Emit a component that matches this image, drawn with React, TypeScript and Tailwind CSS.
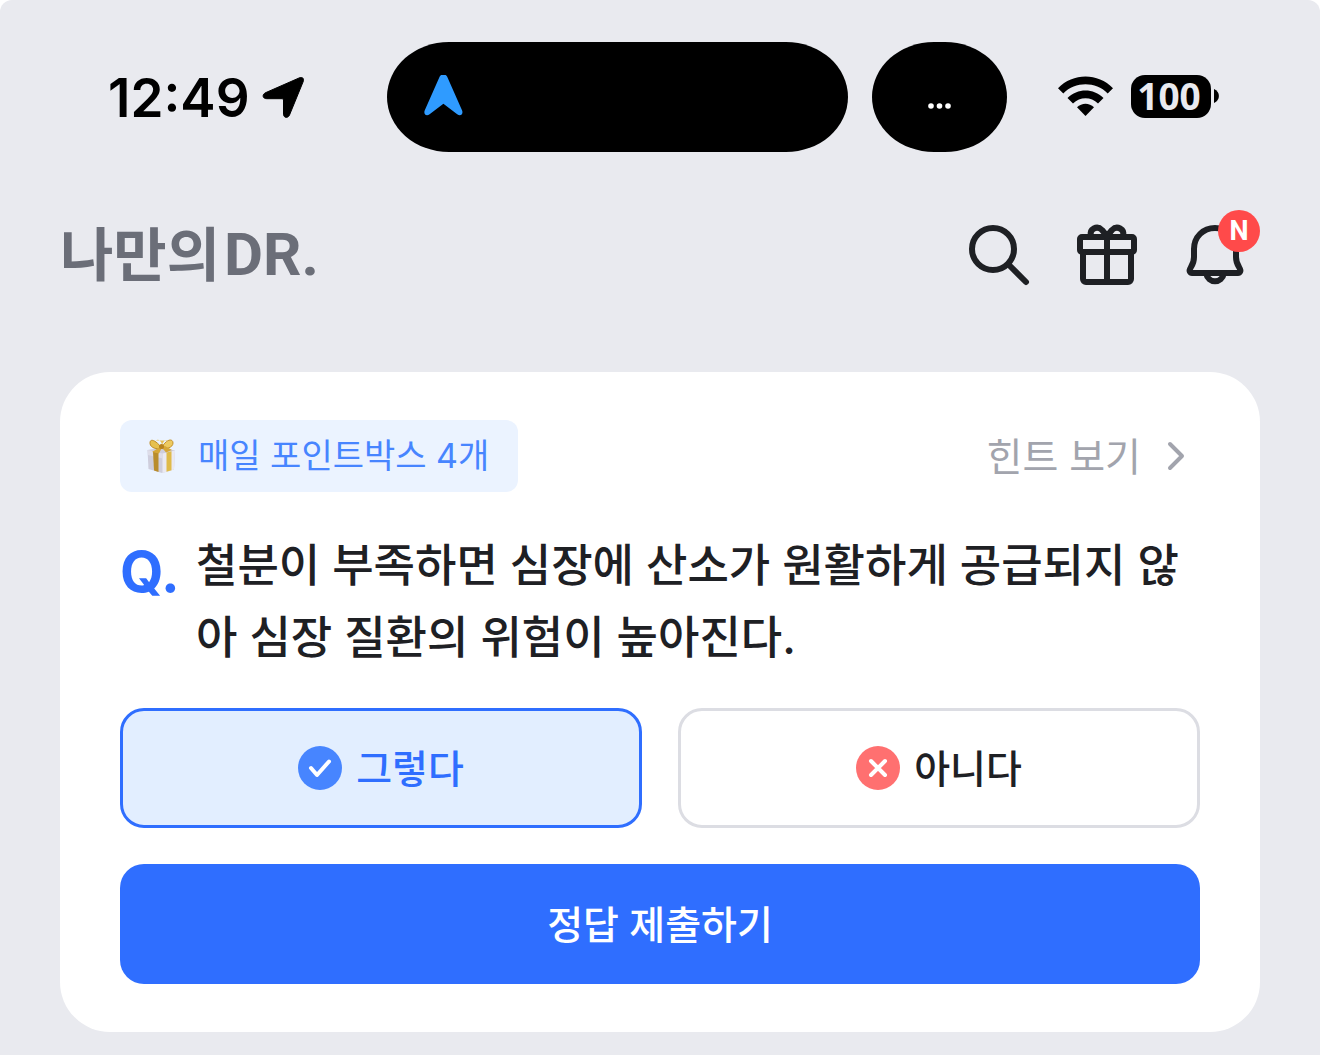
import { useState } from "react";

const answers = [
  { id: "yes", label: "그렇다" },
  { id: "no", label: "아니다" },
];

function StatusBar() {
  return (
    <header className="flex h-[110px] items-center pr-[41px] pl-[48px]">
      <div className="flex w-[279px] items-center gap-3">
        <time className="pt-[2px] text-[53px] leading-none font-semibold">12:49</time>
        <svg viewBox="0 0 44 44" className="size-[44px]" aria-hidden="true">
          <path
            d="M4 17.500 37 3c3.500-1.500 5.500.5 4 4L27.500 40c-1.500 3.500-6 3-6-.8V25c0-.9-.4-1.300-1.300-1.300H4.800c-4.500 0-5-4.500-.8-6.200Z"
            stroke="#000"
            strokeWidth="1"
          />
        </svg>
      </div>
      <div className="flex h-full gap-6">
        <div className="flex w-[461px] items-center rounded-[62px/55px] bg-black pl-[37px]">
          <svg viewBox="0 0 40 44" className="h-[44px] w-[40px]" aria-hidden="true">
            <path
              d="M15.600 1.800c1.600-3.300 6-3.300 7.600 0L38 35.300c1.700 4-1.600 6.500-4.800 4L19.400 28.800 5.600 39.300c-3.200 2.500-6.500 0-4.800-4Z"
              fill="#2f9bff"
            />
          </svg>
        </div>
        <div className="flex w-[135px] items-center justify-center rounded-[62px/55px] bg-black pt-[18px]">
          <svg viewBox="0 0 24 6" className="h-[6px] w-[24px]" fill="#fff" aria-hidden="true">
            <circle cx="3" cy="3" r="2.8" />
            <circle cx="11.500" cy="3" r="2.8" />
            <circle cx="20" cy="3" r="2.8" />
          </svg>
        </div>
      </div>
      <div className="ml-auto flex items-center gap-[18px] pb-[2px]">
        <svg viewBox="0 0 55 40" className="h-[40px] w-[55px]" aria-hidden="true">
          <path d="M0 12.200C15-3.400 40-3.400 55 12.200l-5.300 5.200C37.500 5.300 17.500 5.300 5.300 17.400Z" />
          <path d="M9.500 22c10-10 26-10 36 0l-5.500 5.400c-7-7-18-7-25 0Z" />
          <path d="M19 31.300c4.800-4.700 12.200-4.700 17 0L27.500 40Z" />
        </svg>
        <div className="flex items-center gap-[3px]">
          <span className="flex h-[43px] w-[80px] items-center justify-center rounded-[14px] bg-black pr-1 font-['Noto_Sans'] text-[37px] font-bold text-[#e9eaef]">
            100
          </span>
          <svg viewBox="0 0 5 14" className="h-[14px] w-[5px]" aria-hidden="true">
            <path d="M0 0c6.500 2.500 6.500 11.500 0 14Z" />
          </svg>
        </div>
      </div>
    </header>
  );
}

function AppBar() {
  return (
    <nav className="flex items-center justify-between">
      <a href="#home" className="flex items-center gap-1 leading-[72px] font-bold whitespace-nowrap text-[#6b6e78]">
        <span className="text-[58px]">나만의</span>
        <span className="font-['Roboto'] text-[60px]">DR.</span>
      </a>
      <div className="flex gap-9 pr-2">
        <button type="button" aria-label="검색">
          <svg viewBox="0 0 72 72" className="size-[72px]" fill="none" stroke="#1e2024" strokeWidth="6" strokeLinecap="round" strokeLinejoin="round">
            <circle cx="29" cy="30" r="21" />
            <path d="m45 46 17 17" />
          </svg>
        </button>
        <button type="button" aria-label="선물">
          <svg viewBox="0 0 72 72" className="size-[72px]" fill="none" stroke="#1e2024" strokeWidth="6" strokeLinecap="round" strokeLinejoin="round">
            <rect x="8" y="18" width="54" height="15" rx="2" />
            <path d="M11 33v27a3 3 0 0 0 3 3h42a3 3 0 0 0 3-3V33M35 18v45" />
            <path d="M19 17c-2-7 6-11 11-6l5 6 5-6c5-5 13-1 11 6" />
          </svg>
        </button>
        <button type="button" aria-label="알림" className="relative">
          <svg viewBox="0 0 72 72" className="size-[72px]" fill="none" stroke="#1e2024" strokeWidth="6" strokeLinecap="round" strokeLinejoin="round">
            <path d="M35 9c-12 0-21 9-21 21v8c0 4-1 7-3 10l-1 2c-1 2 0 4 2 4h46c2 0 3-2 2-4l-1-2c-2-3-3-6-3-10v-8c0-12-9-21-21-21Z" />
            <path d="M26 54c2 11 16 11 18 0" />
          </svg>
          <span className="absolute -top-[9px] -right-2 flex size-[42px] items-center justify-center rounded-full bg-[#ff4a4a] font-['Roboto'] text-[27px] font-bold text-white">
            N
          </span>
        </button>
      </div>
    </nav>
  );
}

function GiftBox() {
  return (
    <svg viewBox="0 0 30 36" className="h-[36px] w-[30px]" aria-hidden="true">
      <path d="m1.500 12 14-2.500L29 12.500l-1 19-12 3.500-13.500-4Z" fill="#cfcedd" />
      <path d="m16.500 15.500 12.500-3-1 19-11.500 3.500Z" fill="#eae9f2" />
      <path d="m1.500 12 15 3.500v5L2 17Z" fill="#dedde9" />
      <path d="m7 13.500 5.500 1.200V34L8 32.500Z" fill="#b98c2c" />
      <path d="m20.500 14.500 5-1.200v19l-5 1.400Z" fill="#dfba49" />
      <path d="M15 9C8 .5 3.500 1 4 5.500s7 6 11 5Z" fill="#e6c04f" stroke="#c08c26" />
      <path d="M16 9c5-8.500 11-8.500 11-4s-7 6.500-11 5.500Z" fill="#edca60" stroke="#c4922c" />
      <path d="m14 9-8 5 7 1.500 3-6 4 5 6-2.500-7-4Z" fill="#d6a738" />
      <path d="M10 2.500c2-2 6 1 6 5 1-4.500 4-6.500 6-5" fill="#e8c256" />
      <circle cx="15.500" cy="8.500" r="2.500" fill="#b8831f" />
    </svg>
  );
}

function AnswerIcon({ id }: { id: string }) {
  return (
    <svg viewBox="0 0 44 44" className="size-[44px]" fill="none" stroke="#fff" strokeWidth="4" strokeLinecap="round" strokeLinejoin="round" aria-hidden="true">
      <circle cx="22" cy="22" r="22" fill={id === "yes" ? "#4785ff" : "#ff7070"} stroke="none" />
      {id === "yes" ? <path d="m13 22 6 7 12-13.500" /> : <path d="m15 15 14 14M29 15 15 29" />}
    </svg>
  );
}

function QuizCard() {
  const [selected, setSelected] = useState("yes");

  return (
    <main className="rounded-[50px] bg-white px-[60px] py-12">
      <div className="flex items-center justify-between">
        <p className="flex h-[72px] items-center gap-[22px] rounded-xl bg-[#ebf3ff] pr-[29px] pl-[26px] text-[34px] leading-none text-[#4785ff]">
          <GiftBox />
          <span>매일 포인트박스 4개</span>
        </p>
        <a href="#hint" className="flex items-center gap-[26px] pr-[15px] text-[39px] leading-none text-[#a2a4ad]">
          힌트 보기
          <svg viewBox="0 0 18 30" className="h-[30px] w-[18px]" fill="none" stroke="currentColor" strokeWidth="4" strokeLinecap="round" strokeLinejoin="round" aria-hidden="true">
            <path d="m3 3 12 12L3 27" />
          </svg>
        </a>
      </div>

      <div className="mt-[38px] flex">
        <span className="w-[76px] shrink-0 text-[56px] leading-[84px] font-bold text-[#2f6eff]">Q.</span>
        <h1 className="text-[45px] leading-[72px] font-medium break-all text-[#1e2024]">
          철분이 부족하면 심장에 산소가 원활하게 공급되지 않아 심장 질환의 위험이 높아진다.
        </h1>
      </div>

      <div className="mt-[34px] grid grid-cols-2 gap-9">
        {answers.map((answer) => (
          <button
            key={answer.id}
            type="button"
            aria-pressed={selected === answer.id}
            onClick={() => setSelected(answer.id)}
            className={`flex h-[120px] items-center justify-center gap-[14px] rounded-3xl border-3 text-[39px] leading-none font-medium ${selected === answer.id ? "border-[#2f6eff] bg-[#e2eeff] text-[#2f6eff]" : "border-[#dcdde3] bg-white text-[#1e2024]"}`}
          >
            <AnswerIcon id={answer.id} />
            {answer.label}
          </button>
        ))}
      </div>

      <button type="button" className="mt-9 h-[120px] w-full rounded-3xl bg-[#2f6eff] text-[39px] leading-none font-medium text-white">
        정답 제출하기
      </button>
    </main>
  );
}

export default function App() {
  return (
    <div className="bg-white">
      <div className="min-h-screen rounded-t-xl bg-[#e9eaef] px-[60px] pt-[42px] pb-[23px] font-['Inter','Noto_Sans_CJK_KR',sans-serif] text-black">
        <StatusBar />
        <div className="mt-[67px] mb-[81px]">
          <AppBar />
        </div>
        <QuizCard />
      </div>
    </div>
  );
}
